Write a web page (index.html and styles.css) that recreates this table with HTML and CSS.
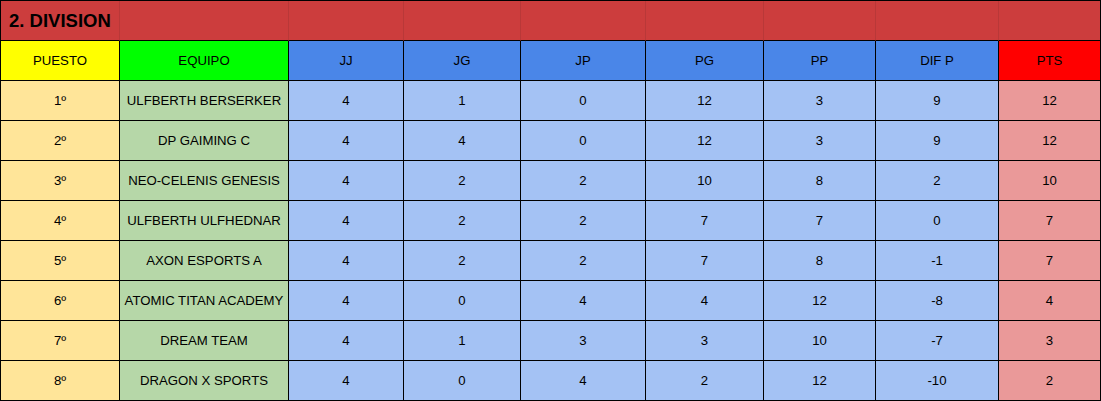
FILE: index.html
```html
<!DOCTYPE html>
<html lang="es">
<head>
<meta charset="utf-8">
<title>2. DIVISION</title>
<link rel="stylesheet" href="styles.css">
</head>
<body>
<div class="sheet">
  <div class="c title first"><span class="title-text">2. DIVISION</span></div>
  <div class="c title"></div><div class="c title"></div><div class="c title"></div><div class="c title"></div><div class="c title"></div><div class="c title"></div><div class="c title"></div><div class="c title last"></div>

  <div class="c h-pos">PUESTO</div><div class="c h-team">EQUIPO</div><div class="c h-stat">JJ</div><div class="c h-stat">JG</div><div class="c h-stat">JP</div><div class="c h-stat">PG</div><div class="c h-stat">PP</div><div class="c h-stat">DIF P</div><div class="c h-pts">PTS</div>

  <div class="c pos">1º</div><div class="c team">ULFBERTH BERSERKER</div><div class="c stat">4</div><div class="c stat">1</div><div class="c stat">0</div><div class="c stat">12</div><div class="c stat">3</div><div class="c stat">9</div><div class="c pts">12</div>
  <div class="c pos">2º</div><div class="c team">DP GAIMING C</div><div class="c stat">4</div><div class="c stat">4</div><div class="c stat">0</div><div class="c stat">12</div><div class="c stat">3</div><div class="c stat">9</div><div class="c pts">12</div>
  <div class="c pos">3º</div><div class="c team">NEO-CELENIS GENESIS</div><div class="c stat">4</div><div class="c stat">2</div><div class="c stat">2</div><div class="c stat">10</div><div class="c stat">8</div><div class="c stat">2</div><div class="c pts">10</div>
  <div class="c pos">4º</div><div class="c team">ULFBERTH ULFHEDNAR</div><div class="c stat">4</div><div class="c stat">2</div><div class="c stat">2</div><div class="c stat">7</div><div class="c stat">7</div><div class="c stat">0</div><div class="c pts">7</div>
  <div class="c pos">5º</div><div class="c team">AXON ESPORTS A</div><div class="c stat">4</div><div class="c stat">2</div><div class="c stat">2</div><div class="c stat">7</div><div class="c stat">8</div><div class="c stat">-1</div><div class="c pts">7</div>
  <div class="c pos">6º</div><div class="c team">ATOMIC TITAN ACADEMY</div><div class="c stat">4</div><div class="c stat">0</div><div class="c stat">4</div><div class="c stat">4</div><div class="c stat">12</div><div class="c stat">-8</div><div class="c pts">4</div>
  <div class="c pos">7º</div><div class="c team">DREAM TEAM</div><div class="c stat">4</div><div class="c stat">1</div><div class="c stat">3</div><div class="c stat">3</div><div class="c stat">10</div><div class="c stat">-7</div><div class="c pts">3</div>
  <div class="c pos">8º</div><div class="c team">DRAGON X SPORTS</div><div class="c stat">4</div><div class="c stat">0</div><div class="c stat">4</div><div class="c stat">2</div><div class="c stat">12</div><div class="c stat">-10</div><div class="c pts">2</div>
</div>
</body>
</html>
```
FILE: styles.css
```css
html, body {
  margin: 0;
  padding: 0;
  background: #ffffff;
}

.sheet {
  display: grid;
  grid-template-columns: 119px 169px 115px 117px 125px 118px 112px 123px 102px;
  grid-auto-rows: 40px;
  width: 1101px;
  box-sizing: border-box;
  border-top: 1px solid #000;
  border-left: 1px solid #000;
  font-family: "Liberation Sans", Arial, sans-serif;
  font-size: 13.2px;
  color: #000;
}

.c {
  box-sizing: border-box;
  border-right: 1px solid #000;
  border-bottom: 1px solid #000;
  display: flex;
  align-items: center;
  justify-content: center;
  white-space: nowrap;
  overflow: visible;
}

.title {
  background: #cc3d3d;
  border-right-color: #b93838;
}

.title.last {
  border-right-color: #000;
}

.title.first {
  justify-content: flex-start;
  padding-left: 8px;
}

.title-text {
  font-size: 18.5px;
  font-weight: bold;
  position: relative;
  z-index: 1;
}

.h-pos { background: #ffff00; }
.h-team { background: #00ff00; }
.h-stat { background: #4a86e8; }
.h-pts { background: #ff0000; }

.pos { background: #ffe599; }
.team { background: #b6d7a8; }
.stat { background: #a4c2f4; }
.pts { background: #ea9999; }
```
